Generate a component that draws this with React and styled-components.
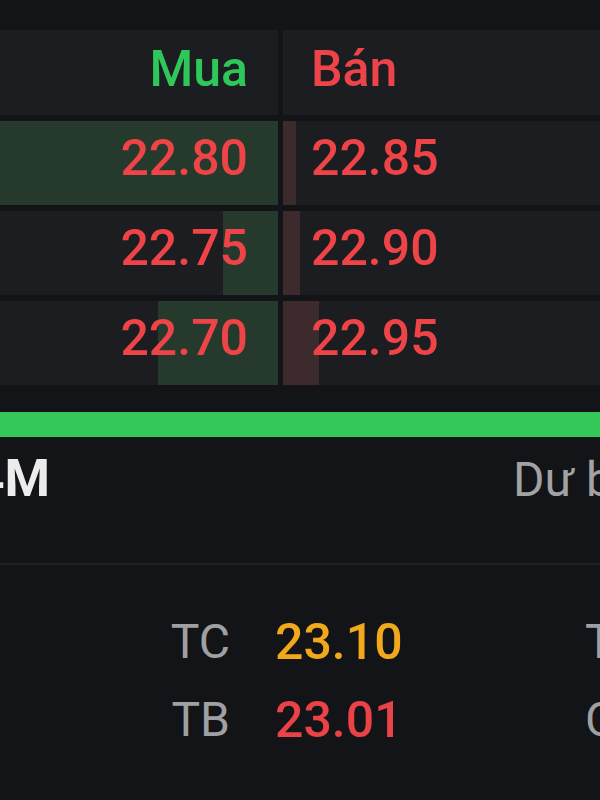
import React from 'react';
import styled, { createGlobalStyle } from 'styled-components';

const GlobalStyle = createGlobalStyle`
    html, body{
        margin:0;
        padding:0;
        background:#131417;
    }
    body{
        font-family: Roboto, "Noto Sans", "Liberation Sans", sans-serif;
    }
`;

const Screen = styled.div`
    width:600px;
    height:800px;
    overflow:hidden;
    background:#131417;
`;

const Book = styled.div`
    display:grid;
    grid-template-columns: 278px 1fr;
    column-gap:5px;
    row-gap:6px;
    margin-top:30px;
`;

const Cell = styled.div`
    position:relative;
    height:${p => p.head ? 85 : 84}px;
    background:#1c1d20;
    display:flex;
    align-items:center;
    justify-content:${p => p.side === 'buy' ? 'flex-end' : 'flex-start'};
    padding:${p => p.side === 'buy' ? '0 30px 0 0' : '0 0 0 28px'};
    padding-bottom:${p => p.head ? 7 : 10}px;
    box-sizing:border-box;
    overflow:hidden;
`;

const Vol = styled.div`
    position:absolute;
    top:0;
    bottom:0;
    ${p => p.side === 'buy' ? 'right:0;' : 'left:0;'}
    background:${p => p.side === 'buy' ? '#253a2c' : '#3d2a2c'};
`;

const HeadText = styled.span`
    position:relative;
    font-size:50px;
    font-weight:500;
    color:${p => p.side === 'buy' ? '#2fc65a' : '#ec4448'};
`;

const Price = styled.span`
    position:relative;
    font-size:50px;
    font-weight:500;
    color:#ee4447;
`;

const GreenLine = styled.div`
    height:25px;
    margin-top:27px;
    background:#34c85b;
    box-shadow:0 0 0 1px #1d1215;
`;

const InfoRow = styled.div`
    display:grid;
    grid-template-columns:50px 1fr;
    column-gap:463px;
    align-items:baseline;
    margin-top:12px;
    line-height:60px;
    white-space:nowrap;
`;

const Clip = styled.div`
    display:flex;
    justify-content:flex-end;
    overflow:hidden;
`;

const Total = styled.span`
    font-size:52px;
    font-weight:700;
    color:#ececec;
`;

const Muted = styled.span`
    font-size:48px;
    color:#a2a2a4;
`;

const Divider = styled.div`
    height:2px;
    margin-top:53px;
    background:#212225;
`;

const Stats = styled.div`
    display:grid;
    grid-template-columns:230px 265px 1fr;
    column-gap:45px;
    margin-top:38px;
    line-height:78px;
    white-space:nowrap;
`;

const Label = styled.span`
    font-size:48px;
    color:#a0a0a2;
    text-align:${p => p.right ? 'right' : 'left'};
`;

const Value = styled.span`
    font-size:50px;
    font-weight:500;
    color:${p => p.color};
`;

const rows = [
    { buy: '22.80', buyVol: 278, sell: '22.85', sellVol: 13 },
    { buy: '22.75', buyVol: 55, sell: '22.90', sellVol: 17 },
    { buy: '22.70', buyVol: 120, sell: '22.95', sellVol: 36 },
];

export default function App(){
    return(
        <Screen>
            <GlobalStyle/>
            <Book>
                <Cell head side="buy"><HeadText side="buy">Mua</HeadText></Cell>
                <Cell head side="sell"><HeadText side="sell">Bán</HeadText></Cell>
                {rows.map((r, i) => (
                    <React.Fragment key={i}>
                        <Cell side="buy">
                            <Vol side="buy" style={{width: r.buyVol}}/>
                            <Price>{r.buy}</Price>
                        </Cell>
                        <Cell side="sell">
                            <Vol side="sell" style={{width: r.sellVol}}/>
                            <Price>{r.sell}</Price>
                        </Cell>
                    </React.Fragment>
                ))}
            </Book>
            <GreenLine/>
            <InfoRow>
                <Clip><Total>1.24M</Total></Clip>
                <Muted>Dư bán</Muted>
            </InfoRow>
            <Divider/>
            <Stats>
                <Label right>TC</Label>
                <Value color="#f2a81b">23.10</Value>
                <Label>Trần</Label>
                <Label right>TB</Label>
                <Value color="#ea4246">23.01</Value>
                <Label>Cao</Label>
            </Stats>
        </Screen>
    )
}
